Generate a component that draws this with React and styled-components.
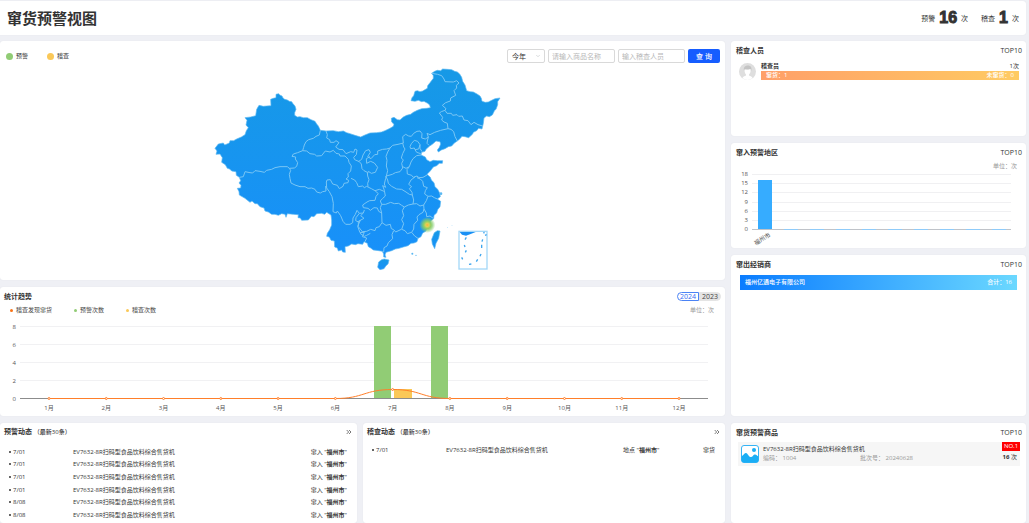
import React, { useState } from "react";
import styled, { createGlobalStyle } from "styled-components";
import { ChevronsRight, ChevronDown } from "lucide-react";

const Global = createGlobalStyle`
  *, *::before, *::after { box-sizing: border-box; }
  html, body { margin: 0; padding: 0; }
  body {
    background: #eff0f5;
    color: #333;
    font: 6px/9px "Open Sans", "Noto Sans CJK SC", sans-serif;
  }
  button, input, select { font: inherit; color: inherit; }
  h1, h2, ul { margin: 0; padding: 0; }
  ul { list-style: none; }
`;

const Page = styled.div`
  min-height: 100vh;
  display: flex;
  flex-direction: column;
  gap: 6px;
  padding: 1px 3px 0 0;
`;

const Header = styled.header`
  display: flex;
  align-items: center;
  justify-content: space-between;
  height: 34px;
  padding: 0 7px;
  background: #fff;
  border-radius: 0 3px 3px 0;
  box-shadow: 0 0 1px #d9dbe0;
`;

const PageTitle = styled.h1`
  font-size: 15px;
  line-height: 24px;
  font-weight: 700;
`;

const Totals = styled.div`
  display: flex;
  gap: 13px;
`;

const Total = styled.div`
  display: flex;
  align-items: center;
  gap: 4px;
  font-size: 7px;
  strong {
    font: 700 16px/20px Impact, "Liberation Sans Narrow", "Liberation Sans", sans-serif;
    -webkit-text-stroke: 1px #333;
  }
`;

const Board = styled.main`
  flex: 1;
  display: grid;
  grid-template-columns: minmax(0, 725fr) minmax(0, 295fr);
  gap: 6px;
`;

const Column = styled.div`
  display: flex;
  flex-direction: column;
  gap: 7px;
  min-width: 0;
`;

const Card = styled.section`
  display: flex;
  flex-direction: column;
  min-width: 0;
  min-height: ${(p) => p.$min || 0}px;
  flex: ${(p) => (p.$grow ? "1 1 0" : "0 0 auto")};
  background: #fff;
  border-radius: 3px;
  box-shadow: 0 0 1px #d9dbe0;
`;

const CardHead = styled.div`
  display: flex;
  align-items: center;
  justify-content: space-between;
  height: 18px;
  padding: 0 4px 0 ${(p) => p.$left || 5}px;
  font-size: 7px;
`;

const CardTitle = styled.h2`
  font-size: 7px;
  font-weight: 700;
  small { font-size: 6px; font-weight: 500; }
`;

const Toolbar = styled.form`
  display: flex;
  align-items: center;
  gap: 3px;
  padding: 8px 5px 0 6px;
  font-size: 7px;
`;

const SeriesKeys = styled.ul`
  display: flex;
  flex: 1;
  gap: ${(p) => p.$gap}px;
  font-size: 6px;
`;

const SeriesKey = styled.li`
  display: flex;
  align-items: center;
  gap: 3px;
  &::before {
    content: "";
    width: ${(p) => p.$size}px;
    height: ${(p) => p.$size}px;
    border-radius: 50%;
    background: ${(p) => p.$color};
  }
`;

const SelectWrap = styled.div`
  position: relative;
  width: 38px;
  svg {
    position: absolute;
    right: 4px;
    top: 4px;
    color: #b5b8bd;
    pointer-events: none;
  }
`;

const Select = styled.select`
  appearance: none;
  display: block;
  width: 100%;
  height: 14px;
  padding: 0 4px;
  border: 1px solid #d9d9d9;
  border-radius: 2px;
  background: #fff;
`;

const Field = styled.input`
  width: 67px;
  height: 14px;
  padding: 0 3px;
  border: 1px solid #d9d9d9;
  border-radius: 2px;
  background: #fff;
  &::placeholder { color: #b8b8b8; opacity: 1; }
`;

const Submit = styled.button`
  width: 32px;
  height: 14px;
  padding: 0;
  border: 0;
  border-radius: 2px;
  background: #165dff;
  color: #fff;
  font-weight: 500;
`;

const MapArea = styled.div`
  flex: 1;
  display: flex;
  justify-content: center;
  padding-right: 6px;
  svg { display: block; width: 320px; height: 214px; }
`;

const YearSwitch = styled.div`
  display: flex;
`;

const YearButton = styled.button`
  height: 9px;
  padding: 0 2px;
  line-height: 7px;
  border: 1px solid ${(p) => (p.$on ? "#4b83f5" : "#e4e4e4")};
  border-radius: ${(p) => (p.$first ? "5px 0 0 5px" : "0 5px 5px 0")};
  background: ${(p) => (p.$on ? "#fff" : "#e4e4e4")};
  color: ${(p) => (p.$on ? "#2f6bf2" : "#444")};
`;

const ChartBar = styled.div`
  display: flex;
  justify-content: space-between;
  padding: 1px ${(p) => p.$right}px ${(p) => p.$bottom || 0}px 10px;
  color: #444;
`;

const Unit = styled.span`
  margin-left: auto;
  color: #999;
`;

const Chart = styled.svg`
  display: block;
  width: 100%;
  height: auto;
  text { font-size: 6px; fill: #555; }
`;

const BottomRow = styled.div`
  flex: 1;
  display: grid;
  grid-template-columns: minmax(0, 357fr) minmax(0, 362fr);
  gap: 6px;
`;

const Feed = styled.ul`
  display: grid;
  grid-template-rows: repeat(${(p) => p.$rows}, 1fr);
  height: ${(p) => p.$height}px;
  margin: ${(p) => p.$top}px 10px 0 9px;
`;

const FeedRow = styled.li`
  display: grid;
  grid-template-columns: ${(p) => p.$columns};
  align-items: center;
  white-space: nowrap;
  > :first-child::before {
    content: "";
    display: inline-block;
    width: 2px;
    height: 2px;
    margin-right: 2px;
    border-radius: 50%;
    background: #333;
    vertical-align: 1px;
  }
  > :last-child { text-align: right; }
  b { font-weight: 700; }
`;

const MoreLink = styled.a`
  display: flex;
  color: #333;
`;

const Person = styled.div`
  display: flex;
  align-items: center;
  gap: 5px;
  padding: 3px 7px 0 8px;
`;

const PersonBody = styled.div`
  flex: 1;
`;

const Line = styled.div`
  display: flex;
  justify-content: space-between;
  align-items: center;
`;

const Band = styled(Line)`
  height: ${(p) => p.$height}px;
  margin: ${(p) => p.$margin || "0"};
  padding: 0 5px;
  background: linear-gradient(90deg, ${(p) => p.$from}, ${(p) => p.$to});
  color: #fff;
  font-weight: 500;
`;

const Goods = styled.div`
  display: flex;
  align-items: stretch;
  gap: 4px;
  height: 24px;
  margin: 1px 6px 0 7px;
  padding-left: 3px;
  background: #f6f6f6;
  > svg { align-self: center; }
`;

const GoodsBody = styled.div`
  flex: 1;
  padding-top: 3px;
`;

const GoodsMeta = styled.div`
  display: grid;
  grid-template-columns: 97px 1fr;
  color: #999;
`;

const GoodsRank = styled.div`
  display: flex;
  flex-direction: column;
  align-items: flex-end;
  gap: 2px;
  span:last-child { padding-right: 3px; }
`;

const Badge = styled.span`
  width: 18px;
  height: 9px;
  background: #f00;
  color: #fff;
  text-align: center;
`;

const COUNTRY =
  "M236 101L239 105 246 108 249 114 254 118 262 120 268 124 275 125 278 130 285 138 288 148 284 158 284 166 292 171 300 170 310 173 322 173 333 179 345 184 350 192 355 198 361 211 378 213 400 212 415 215 430 213 440 218 450 221 465 226 482 231 495 225 510 219 530 218 545 216 555 212 570 205 580 199 582 193 575 186 574 175 582 172 592 179 600 180 610 171 620 166 632 163 640 157 652 151 665 146 680 145 691 143 689 135 683 130 672 124 665 125 655 121 645 124 633 122 636 113 641 107 645 94 652 92 660 95 668 93 682 85 683 77 690 68 700 55 700 47 695 40 704 34 712 31 722 32 728 27 742 28 755 29 764 34 772 36 779 42 785 52 788 64 795 75 800 92 810 95 820 96 831 102 840 108 844 115 846 124 856 127 865 126 875 121 885 116 900 114 893 125 893 134 888 148 884 151 877 165 868 170 860 168 852 174 850 190 846 207 836 205 830 212 820 217 818 222 806 233 795 230 786 229 780 236 772 243 763 249 755 258 745 260 735 266 724 270 715 276 712 270 718 262 722 252 720 245 708 243 698 252 688 259 678 268 675 274 665 277 663 285 676 291 680 299 690 305 700 301 712 302 728 302 727 310 718 310 710 317 700 321 690 334 681 343 691 352 694 360 702 368 705 380 713 388 719 399 721 410 712 417 722 424 720 440 713 449 710 459 702 466 701 476 692 483 690 496 682 504 677 514 668 519 663 530 654 535 651 545 642 549 633 550 624 557 610 561 597 565 586 567 575 572 558 577 555 585 558 592 551 591 551 582 547 574 536 572 520 570 512 564 505 560 502 550 492 545 488 553 474 551 466 554 455 552 445 558 435 560 436 577 428 576 425 570 415 573 412 564 404 561 403 543 393 541 388 531 380 529 382 520 389 509 395 495 395 480 393 465 380 457 374 463 365 460 350 461 342 470 334 469 325 480 305 481 301 474 294 473 295 464 280 463 262 461 258 472 255 463 245 461 235 466 225 463 215 463 205 456 195 453 192 444 180 440 172 431 165 431 156 423 150 427 135 415 118 405 117 395 112 385 122 384 123 376 117 369 122 362 118 352 109 346 108 335 95 333 89 327 82 325 76 314 65 307 67 293 60 282 48 283 51 273 45 265 55 252 70 249 74 255 88 249 90 242 101 242 110 237 124 231 135 224 139 212 145 203 138 195 141 181 135 173 152 171 167 167 170 148 177 136 190 139 200 138 213 137 212 118 220 115 228 113 228 103Z";

const PROVINCES = [
  "M361 211L358 225 348 229 340 235 326 239 318 245 313 255 311 262 308 272 293 278 280 282 276 289 287 291 286 297 293 308 290 319 283 324 268 325",
  "M268 325L262 320 240 320 225 323 215 328 200 331 193 337 180 334 165 332 158 339 150 338 135 335 130 350 118 352",
  "M268 325L272 331 268 343 270 355 273 369 285 375 300 380 315 380 324 385 335 384 345 388 350 396 361 399 368 395 378 393 377 378",
  "M308 272L320 273 330 281 344 283 350 288 365 287 371 279 376 273 390 276 400 271 408 280 418 282 420 288 435 288 445 298 447 307 454 318 452 333 444 341 445 351 438 357 446 361 444 368 432 370 429 379 418 386 412 376 398 372 391 359 381 360 379 366 380 384 388 395 396 410 400 430 399 455",
  "M378 213L382 224 380 234 389 239 391 247 402 247 408 242 417 248 407 261 417 268 429 269 438 281 452 275 461 277 465 267 471 270 469 284 461 292 464 299 478 305 484 312 486 326 492 332 502 337 503 348",
  "M475 305L485 298 489 285 497 272 507 269 511 277 503 290 513 296 524 284 533 283 533 273 548 268 560 267 570 264 578 256 594 253 610 249 608 230 617 223 626 228 634 229 641 220 651 214 660 213 666 221 665 234 676 237 685 231 681 220 690 224 704 217 722 211 744 206 742 190 732 186 725 180 728 172 718 159 724 155 735 151 738 146 727 136 737 128 751 123 752 114 767 106 762 92 770 84 769 76 777 69 770 62 760 66 735 65 732 57 725 47 713 43 695 40",
  "M735 151L741 160 754 160 758 166 771 164 776 169 787 168 792 180 804 182 813 194 822 187 834 194 848 198",
  "M744 206L753 208 761 215 765 230 772 243",
  "M685 231L682 243 681 250 687 256",
  "M570 264L563 276 558 289 561 301 559 318 563 332 559 348 557 355",
  "M608 249L611 261 615 267 608 281 604 294 610 300 605 310 608 324 600 335 586 338 577 343 559 348",
  "M630 260L634 251 643 241 653 244 660 254 656 267 645 269 643 264 632 266ZM660 254L660 265 666 275M645 269L650 277 662 281",
  "M663 285L650 287 639 296 633 306 628 320 618 325 608 320M628 320L621 329 622 342 635 346 640 352 651 348 657 353 669 352 681 345",
  "M557 348L563 360 565 370 575 379 590 387 605 388 618 396 628 403 637 405M646 350L633 360 626 373 635 380 628 386 636 397 637 405",
  "M651 353L661 357 668 364 671 379 682 383 676 392 674 402 684 409 679 422 671 435 660 438 650 431 639 432 641 420 637 405M684 409L695 408 703 413 712 417",
  "M557 355L553 372 557 382 548 377 553 391 556 408 547 416 541 423 545 433 557 433 572 427 583 431 596 430 605 436 613 441 625 435 639 432",
  "M453 355L464 360 470 368 475 380 488 378 493 383 500 379 514 386 525 392 538 388 552 394M503 348L507 359 503 370 504 380",
  "M500 310L512 304 523 309 533 322 526 337 514 340 505 334 502 342M500 310L499 296 510 290",
  "M525 392L535 401 528 409 525 421 509 422 501 426 488 435 490 443 504 445 511 451 522 443 532 444 536 454 545 459 546 488",
  "M399 455L409 459 412 453 422 467 429 484 437 493 450 493 458 488 459 474 466 463 471 451 478 460 490 459 493 450",
  "M478 460L468 473 467 482 476 486 481 481 473 499 480 518 493 517 487 530 500 534 495 545M490 459L482 467 492 475 475 484 475 500 487 515 500 514 512 508 525 512 528 503 538 500 546 488 558 496 571 493 574 506 581 509 587 516 604 508",
  "M545 433L541 443 545 459M613 441L607 452 611 467 605 479 611 491 605 508 615 512 622 521 635 517",
  "M581 512L576 524 578 536 565 548 561 558 552 563 551 577",
  "M671 435L672 447 669 457 657 464 651 471 653 481 642 493 641 507 635 517 644 528 654 535M672 447L679 459 680 470 690 468 701 476",
  "M487 515L480 520 493 529 500 526 511 520",
];

function ChinaMap() {
  return (
    <svg viewBox="0 9 960 642" role="img" aria-label="中国地图">
      <defs>
        <linearGradient id="land" x1="0" y1="0" x2="0" y2="1">
          <stop offset="0" stopColor="#1699e6" />
          <stop offset="1" stopColor="#1890fa" />
        </linearGradient>
        <radialGradient id="heat">
          <stop offset="0" stopColor="#ffb03b" />
          <stop offset="0.2" stopColor="#e3cf55" />
          <stop offset="0.45" stopColor="#8fce66" />
          <stop offset="0.65" stopColor="#86cd6c" stopOpacity="0.7" />
          <stop offset="1" stopColor="#86cd6c" stopOpacity="0" />
        </radialGradient>
      </defs>
      <g fill="url(#land)" stroke="#5ab8f2" strokeWidth="2" strokeLinejoin="round">
        <path d={COUNTRY} />
        <path d="M536 606L545 599 553 597 567 600 564 612 558 617 552 626 540 629 533 622Z" />
        <path d="M712 512L720 513 716 535 708 550 704 566 697 552 695 538 703 518Z" />
      </g>
      <path d={PROVINCES.join("")} fill="none" stroke="#79c6f5" strokeWidth="3" strokeLinejoin="round" />
      <g fill="#5ab8f2">
        <circle cx="637" cy="581" r="3" />
        <circle cx="648" cy="586" r="2" />
        <circle cx="742" cy="502" r="1" />
        <circle cx="756" cy="496" r="1" />
        <circle cx="723" cy="401" r="4" />
      </g>
      <rect x="777" y="514" width="84" height="113" fill="none" stroke="#a5d8f8" strokeWidth="4" />
      <path d="M779 516H827L812 522 798 527 786 524Z" fill="#1890f5" />
      <path
        d="M799 532L795 539M793 555L795 561M799 571L796 577M785 592L788 598M807 613L814 612M829 605L833 598M840 589L843 582M845 564V554M846 545L848 538M851 516L853 520M855 526L860 524"
        stroke="#3fa6ee"
        strokeWidth="4"
      />
      <circle cx="682" cy="495" r="24" fill="url(#heat)" />
    </svg>
  );
}

const MONTHS = Array.from({ length: 12 }, (_, i) => ({ label: `${i + 1}月`, x: 49 + (i * 630) / 11 }));

function TrendChart() {
  return (
    <Chart viewBox="0 0 725 98" role="img" aria-label="统计趋势">
      {[8, 6, 4, 2, 0].map((v, i) => {
        const y = 8 + i * 18;
        return (
          <g key={v}>
            <path d={`M20 ${y + 0.5}H708`} stroke={v ? "#f1f1f3" : "#8c8c8c"} />
            <text x="16" y={y + 3} textAnchor="end">{v}</text>
          </g>
        );
      })}
      <g fill="#91cc75">
        <rect x="374" y="8" width="17" height="72" />
        <rect x="431" y="8" width="17" height="72" />
      </g>
      <rect x="394" y="71" width="18" height="9" fill="#fac858" />
      <path
        d="M49 80.500H335.400C364 80.500 364 71.500 392.700 71.500S421 80.500 450 80.500H679"
        fill="none"
        stroke="#ff7f2a"
      />
      {MONTHS.map((m, i) => (
        <g key={m.label}>
          <circle cx={m.x} cy={i === 6 ? 71.5 : 80.5} r="1" fill="#fff" stroke="#ff7f2a" />
          <text x={m.x} y="92" textAnchor="middle">{m.label}</text>
        </g>
      ))}
    </Chart>
  );
}

function RegionChart() {
  return (
    <Chart viewBox="0 0 295 77" role="img" aria-label="窜入预警地区">
      {[18, 15, 12, 9, 6, 3, 0].map((v, i) => {
        const y = 3 + Math.round((i * 55) / 6);
        return (
          <g key={v}>
            <path d={`M21 ${y + 0.5}H280`} stroke={v ? "#f0f0f2" : "#bfc3c9"} />
            <text x="17" y={y + 2} textAnchor="end">{v}</text>
          </g>
        );
      })}
      <rect x="27" y="9" width="14" height="49" fill="#36acff" />
      {Array.from({ length: 9 }, (_, i) => (
        <path key={i} d={`M${53 + i * 26} 58.500h14`} stroke="#8ecbfa" />
      ))}
      <text transform="translate(40 65) rotate(-32)" textAnchor="end">福州市</text>
    </Chart>
  );
}

const PRODUCT = "EV7632-8R扫码型食品饮料综合售货机";
const WARNINGS = ["7/01", "7/01", "7/01", "7/01", "8/08", "8/08"];

function More({ label }) {
  return (
    <MoreLink href="#more" aria-label={label}>
      <ChevronsRight size={8} strokeWidth={2} />
    </MoreLink>
  );
}

export default function App() {
  const [year, setYear] = useState("2024");
  return (
    <>
      <Global />
      <Page>
        <Header>
          <PageTitle>窜货预警视图</PageTitle>
          <Totals>
            <Total>预警<strong>16</strong>次</Total>
            <Total>稽查<strong>1</strong>次</Total>
          </Totals>
        </Header>
        <Board>
          <Column>
            <Card $min={239}>
              <Toolbar onSubmit={(e) => e.preventDefault()}>
                <SeriesKeys $gap={19}>
                  <SeriesKey $size={7} $color="#91cc75">预警</SeriesKey>
                  <SeriesKey $size={7} $color="#fac858">稽查</SeriesKey>
                </SeriesKeys>
                <SelectWrap>
                  <Select aria-label="时间范围" defaultValue="今年">
                    <option>今年</option>
                  </Select>
                  <ChevronDown size={6} />
                </SelectWrap>
                <Field aria-label="商品名称" placeholder="请输入商品名称" />
                <Field aria-label="稽查人员" placeholder="输入稽查人员" />
                <Submit type="submit">查 询</Submit>
              </Toolbar>
              <MapArea>
                <ChinaMap />
              </MapArea>
            </Card>
            <Card $min={129}>
              <CardHead $left={4}>
                <CardTitle>统计趋势</CardTitle>
                <YearSwitch>
                  {["2024", "2023"].map((y, i) => (
                    <YearButton key={y} type="button" $first={i === 0} $on={y === year} onClick={() => setYear(y)}>
                      {y}
                    </YearButton>
                  ))}
                </YearSwitch>
              </CardHead>
              <ChartBar $right={11} $bottom={3}>
                <SeriesKeys $gap={22}>
                  <SeriesKey $size={3} $color="#f97316">稽查发现窜货</SeriesKey>
                  <SeriesKey $size={3} $color="#91cc75">预警次数</SeriesKey>
                  <SeriesKey $size={3} $color="#fac858">稽查次数</SeriesKey>
                </SeriesKeys>
                <Unit>单位：次</Unit>
              </ChartBar>
              <TrendChart />
            </Card>
            <BottomRow>
              <Card $grow>
                <CardHead $left={4}>
                  <CardTitle>预警动态 <small>（最新30条）</small></CardTitle>
                  <More label="更多预警动态" />
                </CardHead>
                <Feed $rows={6} $height={76} $top={5}>
                  {WARNINGS.map((date, i) => (
                    <FeedRow key={i} $columns="64px 1fr auto">
                      <span>{date}</span>
                      <span>{PRODUCT}</span>
                      <span>窜入 "<b>福州市</b>"</span>
                    </FeedRow>
                  ))}
                </Feed>
              </Card>
              <Card $grow>
                <CardHead $left={4}>
                  <CardTitle>稽查动态 <small>（最新30条）</small></CardTitle>
                  <More label="更多稽查动态" />
                </CardHead>
                <Feed $rows={1} $height={13} $top={3}>
                  <FeedRow $columns="74px 177px 1fr auto">
                    <span>7/01</span>
                    <span>{PRODUCT}</span>
                    <span>地点 "<b>福州市</b>"</span>
                    <span>窜货</span>
                  </FeedRow>
                </Feed>
              </Card>
            </BottomRow>
          </Column>
          <Column>
            <Card $min={95}>
              <CardHead>
                <CardTitle>稽查人员</CardTitle>
                <span>TOP10</span>
              </CardHead>
              <Person>
                <svg width="17" height="17" viewBox="0 0 34 34" aria-hidden="true">
                  <circle cx="17" cy="17" r="17" fill="#dedede" />
                  <path d="M10 16c-2-8 3-11 8-11s9 4 6 12l-2-5c-3 1-7 1-10 0z" fill="#c4c4c4" />
                  <path d="M11 13c3 1 8 1 12-1 1 6-1 9-3 11v2c3 1 6 2 7 5-6 5-14 5-20 0 1-3 4-4 7-5v-2c-2-2-3-5-3-10z" fill="#fff" />
                </svg>
                <PersonBody>
                  <Line><b>稽查员</b><span>1次</span></Line>
                  <Band $height={9} $from="#ff9f69" $to="#ffcb62">
                    <span>窜货：1</span>
                    <span>未窜货：0</span>
                  </Band>
                </PersonBody>
              </Person>
            </Card>
            <Card $min={105}>
              <CardHead>
                <CardTitle>窜入预警地区</CardTitle>
                <span>TOP10</span>
              </CardHead>
              <ChartBar $right={9}>
                <Unit>单位：次</Unit>
              </ChartBar>
              <RegionChart />
            </Card>
            <Card $min={161}>
              <CardHead>
                <CardTitle>窜出经销商</CardTitle>
                <span>TOP10</span>
              </CardHead>
              <Band $height={15} $margin="2px 9px 0" $from="#0a7cff" $to="#6bd8ff">
                <span>福州亿通电子有限公司</span>
                <span>合计：16</span>
              </Band>
            </Card>
            <Card $grow>
              <CardHead>
                <CardTitle>窜货预警商品</CardTitle>
                <span>TOP10</span>
              </CardHead>
              <Goods>
                <svg width="18" height="18" viewBox="0 0 36 36" aria-hidden="true">
                  <rect x="1" y="1" width="34" height="34" rx="5" fill="#fff" stroke="#37b4f5" strokeWidth="2" />
                  <circle cx="26" cy="10" r="4" fill="#1aaef5" />
                  <path d="M1 23c4-3 6-7 9-7s5 7 9 8 5-4 8-5 5 2 8 4v7q0 5-5 5H6q-5 0-5-5z" fill="#1aaef5" />
                </svg>
                <GoodsBody>
                  <div>{PRODUCT}</div>
                  <GoodsMeta>
                    <span>编码： 1004</span>
                    <span>批次号： 20240628</span>
                  </GoodsMeta>
                </GoodsBody>
                <GoodsRank>
                  <Badge>NO.1</Badge>
                  <span><b>16</b> 次</span>
                </GoodsRank>
              </Goods>
            </Card>
          </Column>
        </Board>
      </Page>
    </>
  );
}
